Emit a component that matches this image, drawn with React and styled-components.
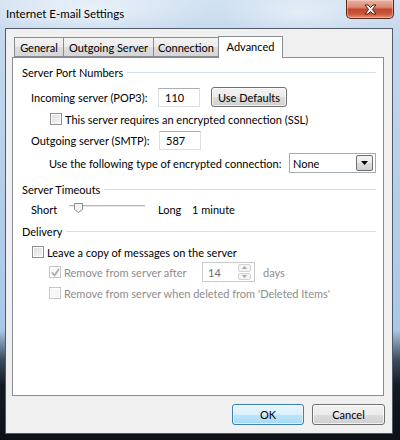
import styled, { createGlobalStyle } from "styled-components";

const GlobalStyle = createGlobalStyle`
  html, body { margin: 0; padding: 0; }
  body {
    font-family: Lato, 'Liberation Sans', sans-serif;
    font-size: 11px;
    color: #000;
  }
`;

const Window = styled.div`
  width: 400px;
  height: 440px;
  display: flex;
  flex-direction: column;
  overflow: hidden;
  background:
    radial-gradient(ellipse 120px 30px at 90px 8px, rgba(255,255,255,0.55), rgba(255,255,255,0)),
    radial-gradient(ellipse 80px 24px at 300px 12px, rgba(255,255,255,0.45), rgba(255,255,255,0)),
    linear-gradient(to bottom, #d2e2f2 0px, #c3d8ed 40px, #b3ceea 200px, #a9c8e8 330px, #3b4b5d 360px, #141a22 385px, #0d1117 440px);
`;

const TitleBar = styled.div`
  height: 28px;
  display: flex;
  align-items: flex-start;
  flex-shrink: 0;
`;

const Title = styled.div`
  padding-left: 6px;
  line-height: 28px;
  font-size: 11.5px;
  text-shadow: 0 0 6px rgba(255,255,255,0.9);
`;

const CloseButton = styled.div`
  margin-left: auto;
  margin-right: 6px;
  width: 46px;
  height: 18px;
  border: 1px solid #5a2418;
  border-top: none;
  border-radius: 0 0 5px 5px;
  display: flex;
  align-items: center;
  justify-content: center;
  background: linear-gradient(to bottom, #eab2a4 0%, #d98a76 40%, #c4462c 52%, #c9573c 78%, #e29478 100%);
  box-shadow: inset 0 0 0 1px rgba(255,220,210,0.45);
`;

const Client = styled.div`
  flex: 1;
  margin: 0 7px 6px 5px;
  border: 1px solid #505b67;
  background: #f0f0f0;
  display: flex;
  flex-direction: column;
  padding: 7px 8px 8px 6px;
`;

const TabRow = styled.div`
  height: 22px;
  margin-bottom: -1px;
  padding-left: 2px;
  display: flex;
  align-items: flex-start;
  position: relative;
  z-index: 1;
`;

const Tab = styled.div`
  box-sizing: border-box;
  width: ${(p) => p.$w}px;
  margin-left: -1px;
  &:first-child { margin-left: 0; }
  height: ${(p) => (p.$active ? 22 : 20)}px;
  margin-top: ${(p) => (p.$active ? 0 : 1)}px;
  border: 1px solid #898c95;
  border-bottom: ${(p) => (p.$active ? "none" : "1px solid #898c95")};
  background: ${(p) =>
    p.$active ? "#fff" : "linear-gradient(to bottom, #f3f3f3 0%, #ebebeb 50%, #dddddd 51%, #d6d6d6 100%)"};
  display: flex;
  align-items: center;
  justify-content: center;
  padding-bottom: ${(p) => (p.$active ? 3 : 0)}px;
  white-space: nowrap;
`;

const Panel = styled.div`
  flex: 1;
  border: 1px solid #898c95;
  background: #fff;
  padding: 6px 7px 0 9px;
  display: flex;
  flex-direction: column;
`;

const SectionHeader = styled.div`
  height: 16px;
  margin-top: ${(p) => p.$mt || 0}px;
  display: flex;
  align-items: center;
  &::after {
    content: "";
    flex: 1;
    height: 1px;
    margin-left: 4px;
    background: #d5dfe5;
  }
`;

const Row = styled.div`
  height: ${(p) => p.$h || 16}px;
  margin-top: ${(p) => p.$mt || 0}px;
  padding-left: ${(p) => p.$indent || 0}px;
  display: flex;
  align-items: center;
  color: ${(p) => (p.$disabled ? "#8d8d8d" : "#000")};
`;

const Label = styled.span`
  width: ${(p) => (p.$w ? `${p.$w}px` : "auto")};
  margin-left: ${(p) => p.$ml || 0}px;
  flex-shrink: 0;
  white-space: nowrap;
`;

const TextBox = styled.div`
  box-sizing: border-box;
  width: ${(p) => p.$w}px;
  height: 19px;
  border: 1px solid #dbdfe6;
  border-top-color: #abadb3;
  background: #fff;
  padding-left: 6px;
  display: flex;
  align-items: center;
`;

const Button = styled.div`
  box-sizing: border-box;
  width: ${(p) => p.$w}px;
  height: ${(p) => p.$h || 21}px;
  margin-left: ${(p) => p.$ml || 0}px;
  border: 1px solid ${(p) => (p.$default ? "#3c7fb1" : "#707070")};
  border-radius: 3px;
  display: flex;
  align-items: center;
  justify-content: center;
  background: ${(p) =>
    p.$default
      ? "linear-gradient(to bottom, #eaf6fd 0%, #d9f0fc 50%, #bee6fd 51%, #a7d9f5 100%)"
      : "linear-gradient(to bottom, #f2f2f2 0%, #ebebeb 50%, #dddddd 51%, #cfcfcf 100%)"};
  box-shadow: inset 0 0 0 1px ${(p) => (p.$default ? "rgba(255,255,255,0.6)" : "rgba(255,255,255,0.7)")};
`;

const Check = styled.div`
  box-sizing: border-box;
  width: 12px;
  height: 12px;
  margin-right: 3px;
  flex-shrink: 0;
  border: 1px solid ${(p) => (p.$disabled ? "#c5c5c5" : "#8e8f8f")};
  background: ${(p) =>
    p.$disabled ? "#f7f7f7" : "linear-gradient(135deg, #dcdcdc 0%, #f6f6f6 100%)"};
  box-shadow: inset 0 0 0 1px #fff;
  display: flex;
  align-items: center;
  justify-content: center;
`;

const Select = styled.div`
  box-sizing: border-box;
  width: 88px;
  height: 20px;
  border: 1px solid #a5acb5;
  background: #fff;
  padding: 0 2px 0 3px;
  display: flex;
  align-items: center;
  justify-content: space-between;
`;

const DropArrow = styled.div`
  box-sizing: border-box;
  width: 17px;
  height: 16px;
  border: 1px solid #707070;
  border-radius: 2px;
  background: linear-gradient(to bottom, #f2f2f2 0%, #ebebeb 50%, #dddddd 51%, #cfcfcf 100%);
  display: flex;
  align-items: center;
  justify-content: center;
`;

const SliderTrack = styled.svg`
  flex-shrink: 0;
  display: block;
`;

const Spinner = styled.div`
  box-sizing: border-box;
  width: 53px;
  height: 20px;
  border: 1px solid #c9cccf;
  background: #fff;
  padding: 1px 3px 1px 5px;
  display: flex;
  align-items: center;
  justify-content: space-between;
  color: #6d6d6d;
`;

const SpinButtons = styled.div`
  width: 13px;
  height: 16px;
  display: flex;
  flex-direction: column;
  gap: 1px;
`;

const SpinPart = styled.div`
  flex: 1;
  border: 1px solid #d4d4d4;
  border-radius: 2px;
  background: #f4f4f4;
  display: flex;
  align-items: center;
  justify-content: center;
`;

const ButtonBar = styled.div`
  margin-top: 8px;
  display: flex;
  justify-content: flex-end;
  gap: 8px;
  margin-right: -1px;
`;

function CloseGlyph() {
  return (
    <svg width="13" height="11" viewBox="0 0 13 11">
      <path
        d="M1 1 L4 1 L6.5 3.5 L9 1 L12 1 L8.3 5.5 L12 10 L9 10 L6.5 7.5 L4 10 L1 10 L4.7 5.5 Z"
        fill="#fff"
        stroke="#4a1d12"
        strokeWidth="1"
        strokeLinejoin="round"
      />
    </svg>
  );
}

function CheckMark() {
  return (
    <svg width="9" height="9" viewBox="0 0 9 9">
      <path d="M1 4.5 L3.5 7.5 L8 1" fill="none" stroke="#a6a6a6" strokeWidth="1.6" />
    </svg>
  );
}

function Triangle({ up, color = "#000", w = 7, h = 4 }) {
  return (
    <svg width={w} height={h} viewBox={`0 0 ${w} ${h}`}>
      <path
        d={up ? `M0 ${h} L${w / 2} 0 L${w} ${h} Z` : `M0 0 L${w} 0 L${w / 2} ${h} Z`}
        fill={color}
      />
    </svg>
  );
}

function TimeoutSlider() {
  return (
    <SliderTrack width="76" height="16" viewBox="0 0 76 16">
      <rect x="0" y="4" width="76" height="1" fill="#b9b9b9" />
      <rect x="0" y="5" width="76" height="1" fill="#e6e6e6" />
      <path d="M5.5 2.5 H13.5 V8.5 L9.5 11.5 L5.5 8.5 Z" fill="#f4f4f4" stroke="#8b8b8b" />
    </SliderTrack>
  );
}

export default function App() {
  return (
    <>
      <GlobalStyle />
      <Window>
        <TitleBar>
          <Title>Internet E-mail Settings</Title>
          <CloseButton>
            <CloseGlyph />
          </CloseButton>
        </TitleBar>
        <Client>
          <TabRow>
            <Tab $w={50}>General</Tab>
            <Tab $w={91}>Outgoing Server</Tab>
            <Tab $w={66}>Connection</Tab>
            <Tab $w={65} $active>Advanced</Tab>
          </TabRow>
          <Panel>
            <SectionHeader>Server Port Numbers</SectionHeader>
            <Row $h={20} $mt={7} $indent={9}>
              <Label $w={127}>Incoming server (POP3):</Label>
              <TextBox $w={42}>110</TextBox>
              <Button $w={76} $h={20} $ml={11}>Use Defaults</Button>
            </Row>
            <Row $mt={4} $indent={28}>
              <Check />
              <Label>This server requires an encrypted connection (SSL)</Label>
            </Row>
            <Row $h={20} $mt={3} $indent={9}>
              <Label $w={128}>Outgoing server (SMTP):</Label>
              <TextBox $w={42}>587</TextBox>
            </Row>
            <Row $h={20} $mt={3} $indent={27}>
              <Label $w={240}>Use the following type of encrypted connection:</Label>
              <Select>
                None
                <DropArrow>
                  <Triangle />
                </DropArrow>
              </Select>
            </Row>
            <SectionHeader $mt={8}>Server Timeouts</SectionHeader>
            <Row $mt={4} $indent={9}>
              <Label $w={38}>Short</Label>
              <TimeoutSlider />
              <Label $w={34} $ml={13}>Long</Label>
              <Label>1 minute</Label>
            </Row>
            <SectionHeader $mt={6}>Delivery</SectionHeader>
            <Row $mt={5} $indent={10}>
              <Check />
              <Label>Leave a copy of messages on the server</Label>
            </Row>
            <Row $h={20} $mt={2} $indent={27} $disabled>
              <Check $disabled>
                <CheckMark />
              </Check>
              <Label $w={138}>Remove from server after</Label>
              <Spinner>
                14
                <SpinButtons>
                  <SpinPart>
                    <Triangle up color="#a8a8a8" w={5} h={3} />
                  </SpinPart>
                  <SpinPart>
                    <Triangle color="#a8a8a8" w={5} h={3} />
                  </SpinPart>
                </SpinButtons>
              </Spinner>
              <Label $ml={8}>days</Label>
            </Row>
            <Row $mt={3} $indent={27} $disabled>
              <Check $disabled />
              <Label>Remove from server when deleted from 'Deleted Items'</Label>
            </Row>
          </Panel>
          <ButtonBar>
            <Button $w={72} $default>OK</Button>
            <Button $w={73}>Cancel</Button>
          </ButtonBar>
        </Client>
      </Window>
    </>
  );
}
